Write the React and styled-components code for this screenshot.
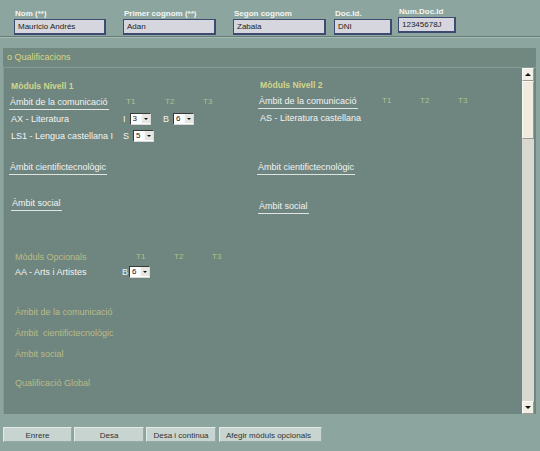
import React from "react";
import styled, { createGlobalStyle } from "styled-components";

const Global = createGlobalStyle`
  html, body { margin: 0; padding: 0; }
  body { background: #8ca59e; font-family: "Liberation Sans", Arial, sans-serif; }
`;

const Page = styled.div`
  width: 540px;
  height: 451px;
  background: #8ca59e;
  overflow: hidden;
`;

const Header = styled.div`
  display: flex;
  align-items: flex-start;
  padding: 8px 0 0 14px;
  height: 28px;
  border-bottom: 1px solid #687d77;
  box-shadow: 0 1px 0 #a5bab4;
`;

const Field = styled.div`
  display: flex;
  flex-direction: column;
  width: ${p => p.$w}px;
  margin-right: ${p => p.$mr}px;
  margin-top: ${p => p.$up ? -2 : 0}px;
`;

const FieldLabel = styled.div`
  color: #f4f6f4;
  font-size: 8px;
  font-weight: bold;
  line-height: 11px;
  height: 11px;
  padding-left: 1px;
`;

const Input = styled.div`
  height: 13px;
  background: #d6d6de;
  border: 1px solid #3e4a72;
  border-right-width: 2px;
  border-bottom-width: 2px;
  font-size: 8px;
  line-height: 13px;
  color: #222;
  padding-left: 3px;
  box-sizing: content-box;
`;

const Panel = styled.div`
  margin: 11px 4px 0 3px;
  background: #6f8680;
`;

const PanelTitle = styled.div`
  height: 19px;
  line-height: 19px;
  padding-left: 4px;
  color: #dcd680;
  font-size: 9px;
  background: #70887f;
  border-bottom: 1px solid #869d96;
`;

const PanelBody = styled.div`
  display: flex;
  height: 346px;
  border-left: 1px solid #84998f;
`;

const Content = styled.div`
  flex: 1;
  padding: 12px 0 0 7px;
`;

const Columns = styled.div`
  display: grid;
  grid-template-columns: 248px 1fr;
`;

const Column = styled.div`
  display: flex;
  flex-direction: column;
  align-items: flex-start;
  margin-top: ${p => p.$top}px;
  padding-left: ${p => p.$left}px;
`;

const LevelTitle = styled.div`
  color: #cfd68a;
  font-size: 8.6px;
  font-weight: bold;
  line-height: 12px;
  height: 12px;
`;

const Row = styled.div`
  display: flex;
  align-items: center;
  height: ${p => p.$h || 17}px;
`;

const Label = styled.div`
  width: ${p => p.$w}px;
  color: ${p => p.$dim ? "#b9bb86" : "#f2f4f2"};
  font-size: 9px;
  white-space: nowrap;
`;

const Heading = styled.div`
  width: fit-content;
  color: #f2f4f2;
  font-size: 9px;
  line-height: 12px;
  padding: 0 1px 1px 1px;
  border-bottom: 1px solid #dfe6e2;
  white-space: nowrap;
  margin-top: ${p => p.$mt || 0}px;
  margin-left: ${p => p.$ml || 0}px;
`;

const HeadWrap = styled.div`
  width: ${p => p.$w}px;
  margin-left: -2px;
  align-self: flex-start;
  padding-top: 4px;
`;

const TCell = styled.div`
  width: ${p => p.$w || 39}px;
  padding-left: 7px;
  box-sizing: border-box;
  color: #a6c38e;
  font-size: 8px;
  align-self: ${p => p.$inline ? "center" : "flex-start"};
  padding-top: ${p => p.$inline ? 0 : 4}px;
  line-height: 12px;
`;

const GradeCell = styled.div`
  width: 40px;
  display: flex;
  align-items: center;
  gap: ${p => p.$gap ?? 4}px;
  color: #f2f4f2;
  font-size: 9px;
`;

const Select = styled.span`
  display: inline-flex;
  align-items: center;
  width: 19px;
  height: 10px;
  background: #ffffff;
  border-top: 1px solid #3a3a3a;
  border-left: 1px solid #3a3a3a;
  border-right: 1px solid #d8d8d8;
  border-bottom: 1px solid #d8d8d8;
  font-size: 8px;
  color: #111;
  box-sizing: content-box;
`;

const SelectValue = styled.span`
  flex: 1;
  padding-left: 2px;
  line-height: 10px;
`;

const SelectArrow = styled.span`
  width: 8px;
  height: 9px;
  background: #e6e6e2;
  display: flex;
  align-items: center;
  justify-content: center;
  border-left: 1px solid #f8f8f8;
  &::after {
    content: "";
    border-left: 2px solid transparent;
    border-right: 2px solid transparent;
    border-top: 2px solid #111;
  }
`;

const Optional = styled.div`
  margin-top: 37px;
  padding-left: 4px;
`;

const DimItem = styled.div`
  color: #b9bb86;
  font-size: 9px;
  line-height: 12px;
  margin-top: ${p => p.$mt}px;
`;

const Scrollbar = styled.div`
  width: 12px;
  margin-right: 2px;
  display: flex;
  flex-direction: column;
`;

const ScrollBtn = styled.div`
  height: 11px;
  background: #f2efe6;
  border: 1px solid #fbfaf6;
  border-right-color: #a09c92;
  border-bottom-color: #a09c92;
  display: flex;
  align-items: center;
  justify-content: center;
  &::after {
    content: "";
    border-left: 3px solid transparent;
    border-right: 3px solid transparent;
    ${p => p.$down ? "border-top: 3px solid #111;" : "border-bottom: 3px solid #111;"}
  }
`;

const Thumb = styled.div`
  height: 56px;
  background: #efebdf;
  border: 1px solid #faf8f2;
  border-right-color: #9f9b90;
  border-bottom-color: #9f9b90;
`;

const Track = styled.div`
  flex: 1;
  background: #d8d7d0;
`;

const Footer = styled.div`
  display: flex;
  gap: 2px;
  padding: 13px 0 0 3px;
`;

const Button = styled.div`
  width: ${p => p.$w}px;
  height: 15px;
  line-height: 15px;
  text-align: ${p => p.$left ? "left" : "center"};
  padding-left: ${p => p.$left ? 6 : 0}px;
  box-sizing: border-box;
  background: #c8d4d0;
  border: 1px solid #e4ece9;
  border-right-color: #98aaa4;
  border-bottom-color: #98aaa4;
  color: #333;
  font-size: 8px;
  margin-left: ${p => p.$ml || 0}px;
`;

function Sel({ v }) {
  return (
    <Select>
      <SelectValue>{v}</SelectValue>
      <SelectArrow />
    </Select>
  );
}

function Grade({ letter, v, gap }) {
  return (
    <GradeCell $gap={gap}>
      {letter}
      <Sel v={v} />
    </GradeCell>
  );
}

export default function App() {
  return (
    <Page>
      <Global />
      <Header>
        <Field $w={92} $mr={17}>
          <FieldLabel>Nom (**)</FieldLabel>
          <Input>Mauricio Andrés</Input>
        </Field>
        <Field $w={93} $mr={17}>
          <FieldLabel>Primer cognom (**)</FieldLabel>
          <Input>Adan</Input>
        </Field>
        <Field $w={93} $mr={8}>
          <FieldLabel>Segon cognom</FieldLabel>
          <Input>Zabala</Input>
        </Field>
        <Field $w={58} $mr={6}>
          <FieldLabel>Doc.Id.</FieldLabel>
          <Input>DNI</Input>
        </Field>
        <Field $w={58} $mr={0} $up>
          <FieldLabel>Num.Doc.Id</FieldLabel>
          <Input>12345678J</Input>
        </Field>
      </Header>

      <Panel>
        <PanelTitle>o Qualificacions</PanelTitle>
        <PanelBody>
          <Content>
            <Columns>
              <Column $top={0} $left={0}>
                <LevelTitle>Mòduls Nivell 1</LevelTitle>
                <Row $h={18}>
                  <HeadWrap $w={110}>
                    <Heading>Àmbit de la comunicació</Heading>
                  </HeadWrap>
                  <TCell $w={39}>T1</TCell>
                  <TCell $w={38}>T2</TCell>
                  <TCell>T3</TCell>
                </Row>
                <Row>
                  <Label $w={112}>AX - Literatura</Label>
                  <Grade letter="I" v="3" />
                  <Grade letter="B" v="6" />
                </Row>
                <Row>
                  <Label $w={112}>LS1 - Lengua castellana I</Label>
                  <Grade letter="S" v="5" />
                </Row>
                <Heading $mt={17} $ml={-2}>Àmbit cientifictecnològic</Heading>
                <Heading $mt={22} $ml={0}>Àmbit social</Heading>
              </Column>
              <Column $top={-1} $left={1}>
                <LevelTitle>Mòduls Nivell 2</LevelTitle>
                <Row $h={18}>
                  <HeadWrap $w={117}>
                    <Heading>Àmbit de la comunicació</Heading>
                  </HeadWrap>
                  <TCell $w={38}>T1</TCell>
                  <TCell $w={38}>T2</TCell>
                  <TCell>T3</TCell>
                </Row>
                <Row>
                  <Label $w={120}>AS - Literatura castellana</Label>
                </Row>
                <Heading $mt={35} $ml={-3}>Àmbit cientifictecnològic</Heading>
                <Heading $mt={25} $ml={-2}>Àmbit social</Heading>
              </Column>
            </Columns>

            <Optional>
              <Row $h={12}>
                <Label $w={114} $dim>Mòduls Opcionals</Label>
                <TCell $w={38} $inline>T1</TCell>
                <TCell $w={38} $inline>T2</TCell>
                <TCell $inline>T3</TCell>
              </Row>
              <Row>
                <Label $w={107}>AA - Arts i Artistes</Label>
                <Grade letter="B" v="6" gap={1} />
              </Row>
              <DimItem $mt={26}>Àmbit de la comunicació</DimItem>
              <DimItem $mt={9}>Àmbit&nbsp; cientifictecnològic</DimItem>
              <DimItem $mt={9}>Àmbit social</DimItem>
              <DimItem $mt={17}>Qualificació Global</DimItem>
            </Optional>
          </Content>
          <Scrollbar>
            <ScrollBtn />
            <Thumb />
            <Track />
            <ScrollBtn $down />
          </Scrollbar>
        </PanelBody>
      </Panel>

      <Footer>
        <Button $w={69}>Enrere</Button>
        <Button $w={70}>Desa</Button>
        <Button $w={70}>Desa i continua</Button>
        <Button $w={103} $left $ml={1}>Afegir mòduls opcionals</Button>
      </Footer>
    </Page>
  );
}
